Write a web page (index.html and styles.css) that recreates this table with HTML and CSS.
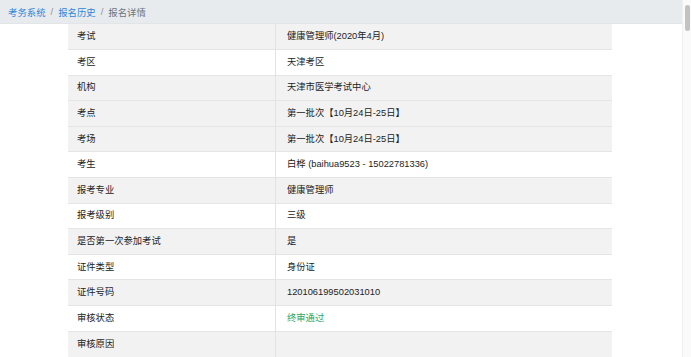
FILE: index.html
```html
<!DOCTYPE html>
<html lang="zh-CN">
<head>
<meta charset="utf-8">
<title>报名详情</title>
<link rel="stylesheet" href="styles.css">
</head>
<body>
<div class="page">
  <div class="main">
    <nav class="crumbs">
      <a class="crumb-link">考务系统</a><span class="sep">/</span><a class="crumb-link">报名历史</a><span class="sep">/</span><span class="crumb-current">报名详情</span>
    </nav>
    <table class="detail">
      <tr class="gray"><td class="label">考试</td><td class="value">健康管理师(2020年4月)</td></tr>
      <tr><td class="label">考区</td><td class="value">天津考区</td></tr>
      <tr class="gray"><td class="label">机构</td><td class="value">天津市医学考试中心</td></tr>
      <tr class="gray"><td class="label">考点</td><td class="value">第一批次【10月24日-25日】</td></tr>
      <tr class="gray"><td class="label">考场</td><td class="value">第一批次【10月24日-25日】</td></tr>
      <tr><td class="label">考生</td><td class="value">白桦 (baihua9523 - 15022781336)</td></tr>
      <tr class="gray"><td class="label">报考专业</td><td class="value">健康管理师</td></tr>
      <tr><td class="label">报考级别</td><td class="value">三级</td></tr>
      <tr class="gray"><td class="label">是否第一次参加考试</td><td class="value">是</td></tr>
      <tr><td class="label">证件类型</td><td class="value">身份证</td></tr>
      <tr class="gray"><td class="label">证件号码</td><td class="value">120106199502031010</td></tr>
      <tr><td class="label">审核状态</td><td class="value ok">终审通过</td></tr>
      <tr class="gray"><td class="label">审核原因</td><td class="value"></td></tr>
    </table>
  </div>
  <div class="scrollbar"><div class="thumb"></div></div>
</div>
</body>
</html>
```
FILE: styles.css
```css
html, body {
  margin: 0;
  padding: 0;
  height: 100%;
  overflow: hidden;
  background: #fff;
}
body {
  font-family: "Liberation Sans", "Noto Sans CJK SC", sans-serif;
  font-size: 9.3px;
  color: #222;
}
.page {
  display: flex;
  height: 357px;
}
.main {
  flex: 1;
  min-width: 0;
}
.crumbs {
  height: 23px;
  background: #e8ebee;
  display: flex;
  align-items: center;
  padding-left: 8px;
  font-size: 9.4px;
  border-bottom: 1px solid #e2e5e8;
}
.crumb-link {
  color: #2f86d6;
}
.sep {
  color: #8a9099;
  margin: 0 5px;
}
.crumb-current {
  color: #6c757d;
}
.detail {
  width: 544px;
  margin: 0 0 0 68px;
  border-collapse: collapse;
  table-layout: fixed;
}
.detail tr {
  height: 25.6px;
}
.detail td {
  padding: 0 9px;
  border-top: 1px solid #e5e5e5;
  vertical-align: middle;
  line-height: 13px;
}
.detail tr:first-child td {
  border-top: none;
}
.detail .label {
  width: 189px;
  border-right: 1px solid #e3e3e3;
}
.detail .value {
  padding-left: 11px;
}
.detail tr.gray td {
  background: #f2f2f2;
}
.ok {
  color: #2aa55c;
}
.scrollbar {
  width: 8px;
  background: #fafafa;
  border-left: 1px solid #f0f0f0;
}
.thumb {
  margin: 5px auto 0;
  width: 5px;
  height: 26px;
  background: #c2c2c2;
  border-radius: 3px;
}
```
